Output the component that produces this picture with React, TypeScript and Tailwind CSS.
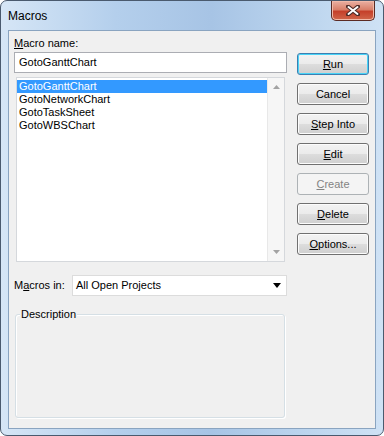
import React from "react";

const font = { fontFamily: '"Liberation Sans", Arial, sans-serif' };

// 带下划线的快捷键字母
function Key({ text, at }: { text: string; at: number }) {
  if (at < 0) return <>{text}</>;
  return (
    <>
      {text.slice(0, at)}
      <span className="underline underline-offset-[1px]">{text[at]}</span>
      {text.slice(at + 1)}
    </>
  );
}

function Btn({
  label,
  at,
  primary,
  disabled,
}: {
  label: string;
  at: number;
  primary?: boolean;
  disabled?: boolean;
}) {
  const base =
    "flex h-[22px] w-[72px] items-center justify-center rounded-[3px] border text-[11px] leading-none";
  if (disabled)
    return (
      <div className={`${base} border-[#adb2b5] bg-[#f4f4f4] text-[#838383]`}>
        <Key text={label} at={at} />
      </div>
    );
  if (primary)
    return (
      <div
        className={`${base} border-[#3c7fb1] bg-[linear-gradient(180deg,#f2f2f2_0%,#ebebeb_50%,#dddddd_51%,#cfcfcf_100%)] text-black shadow-[inset_0_0_0_1px_#48d3f7]`}
      >
        <Key text={label} at={at} />
      </div>
    );
  return (
    <div
      className={`${base} border-[#707070] bg-[linear-gradient(180deg,#f2f2f2_0%,#ebebeb_50%,#dddddd_51%,#cfcfcf_100%)] text-black shadow-[inset_0_0_0_1px_#fcfcfc]`}
    >
      <Key text={label} at={at} />
    </div>
  );
}

const macros = ["GotoGanttChart", "GotoNetworkChart", "GotoTaskSheet", "GotoWBSChart"];

export default function App() {
  return (
    <div
      style={font}
      className="relative flex h-[436px] w-[384px] flex-col rounded-[7px] border border-[#4a5a6e] bg-[linear-gradient(90deg,#d6e6f6_0%,#b4cfec_30%,#a7c4e5_55%,#bcd5ee_80%,#cfe2f5_100%)] text-black"
    >
      {/* 标题栏 */}
      <div className="flex h-[29px] items-center pl-[7px] text-[12px]">Macros</div>
      <div className="absolute right-[8px] top-0 flex h-[20px] w-[44px] items-center justify-center rounded-b-[5px] border border-t-0 border-[#5b2b24] bg-[linear-gradient(180deg,#eab0a2_0%,#d9806a_45%,#c5402a_55%,#d0664a_100%)] shadow-[inset_0_0_0_1px_#f1b9a8]">
        <svg width="14" height="11" viewBox="0 0 14 11">
          <path d="M2 1.5 L12 9.5 M12 1.5 L2 9.5" stroke="#4b2a26" strokeWidth="4" strokeLinecap="round" />
          <path d="M2.5 2 L11.5 9 M11.5 2 L2.5 9" stroke="#ffffff" strokeWidth="2" strokeLinecap="round" />
        </svg>
      </div>

      {/* 客户区 */}
      <div className="mx-[7px] flex h-[399px] border border-[#8aa4c0] bg-[#f0f0f0]">
        <div className="ml-[5px] flex w-[273px] flex-col pt-[6px] text-[11px]">
          <div className="h-[13px] leading-[13px]">
            <Key text="Macro name:" at={0} />
          </div>
          <div className="mt-[2px] flex h-[21px] w-[273px] items-center border border-[#abadb3] bg-white pl-[4px]">
            GotoGanttChart
          </div>
          <div className="ml-[2px] mt-[4px] flex h-[185px] w-[269px] border border-[#d5d8dc] bg-white">
            <div className="flex flex-1 flex-col pt-[2px]">
              {macros.map((m, i) => (
                <div
                  key={m}
                  className={`h-[13px] pl-[2px] leading-[13px] ${
                    i === 0 ? "bg-[#3399ff] text-white" : ""
                  }`}
                >
                  {m}
                </div>
              ))}
            </div>
            <div className="flex w-[17px] flex-col items-center justify-between border-l border-[#e8e8e8] bg-[#f6f6f6] py-[7px]">
              <svg width="7" height="4" viewBox="0 0 7 4">
                <path d="M0 4 L3.5 0 L7 4 Z" fill="#a3a3a3" />
              </svg>
              <svg width="7" height="4" viewBox="0 0 7 4">
                <path d="M0 0 L7 0 L3.5 4 Z" fill="#a3a3a3" />
              </svg>
            </div>
          </div>
          <div className="mt-[13px] flex h-[21px] items-center">
            <div className="w-[58px]">
              <Key text="Macros in:" at={1} />
            </div>
            <div className="flex h-[21px] flex-1 items-center justify-between border border-[#dcdcdc] bg-white pl-[3px] pr-[5px]">
              <span>All Open Projects</span>
              <svg width="8" height="5" viewBox="0 0 8 5">
                <path d="M0 0 L8 0 L4 5 Z" fill="#000" />
              </svg>
            </div>
          </div>
          <div className="relative ml-[1px] mt-[18px] h-[104px] w-[270px] rounded-[3px] border border-[#d5dfe5] shadow-[inset_1px_1px_0_#ffffff,1px_1px_0_#ffffff]">
            <div className="absolute -top-[7px] left-[4px] bg-[#f0f0f0] px-[1px] leading-[13px]">
              Description
            </div>
          </div>
        </div>
        <div className="ml-[10px] flex flex-col gap-[8px] pt-[22px]">
          <Btn label="Run" at={0} primary />
          <Btn label="Cancel" at={-1} />
          <Btn label="Step Into" at={0} />
          <Btn label="Edit" at={0} />
          <Btn label="Create" at={0} disabled />
          <Btn label="Delete" at={0} />
          <Btn label="Options..." at={0} />
        </div>
      </div>
    </div>
  );
}
